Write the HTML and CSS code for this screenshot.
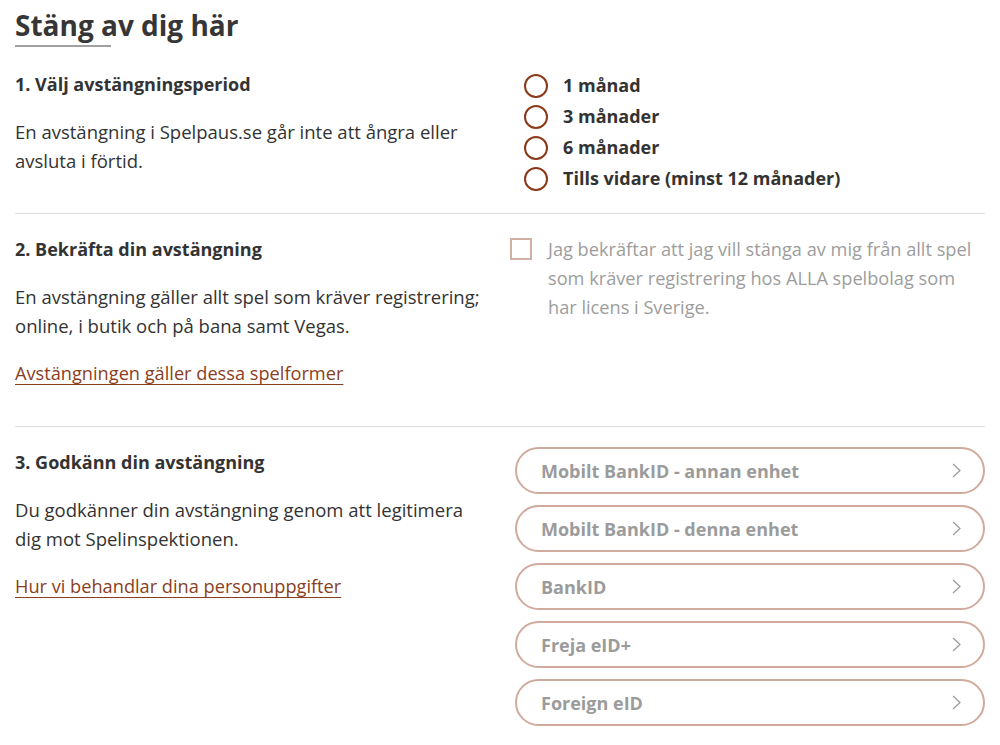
FILE: index.html
```html
<!DOCTYPE html>
<html lang="sv">
<head>
<meta charset="utf-8">
<title>Stäng av dig här</title>
<link rel="stylesheet" href="styles.css">
</head>
<body>
<main class="page">
  <h1 class="title">Stäng av dig här</h1>
  <div class="title-bar"></div>

  <section class="step step-one">
    <div class="left">
      <h2 class="step-head">1. Välj avstängningsperiod</h2>
      <p class="text">En avstängning i Spelpaus.se går inte att ångra eller avsluta i förtid.</p>
    </div>
    <div class="right">
      <ul class="radios">
        <li class="radio"><span class="circle"></span>1 månad</li>
        <li class="radio"><span class="circle"></span>3 månader</li>
        <li class="radio"><span class="circle"></span>6 månader</li>
        <li class="radio"><span class="circle"></span>Tills vidare (minst 12 månader)</li>
      </ul>
    </div>
  </section>

  <section class="step step-two">
    <div class="left">
      <h2 class="step-head">2. Bekräfta din avstängning</h2>
      <p class="text">En avstängning gäller allt spel som kräver registrering; online, i butik och på bana samt Vegas.</p>
      <a class="link" href="#">Avstängningen gäller dessa spelformer</a>
    </div>
    <div class="right">
      <label class="confirm"><span class="box"></span><span class="confirm-text">Jag bekräftar att jag vill stänga av mig från allt spel som kräver registrering hos ALLA spelbolag som har licens i Sverige.</span></label>
    </div>
  </section>

  <section class="step step-three">
    <div class="left">
      <h2 class="step-head">3. Godkänn din avstängning</h2>
      <p class="text">Du godkänner din avstängning genom att legitimera dig mot Spelinspektionen.</p>
      <a class="link" href="#">Hur vi behandlar dina personuppgifter</a>
    </div>
    <div class="right buttons">
      <button class="idbtn">Mobilt BankID - annan enhet<svg class="chev" viewBox="0 0 9 15"><path d="M1 1l7 6.5-7 6.5"/></svg></button>
      <button class="idbtn">Mobilt BankID - denna enhet<svg class="chev" viewBox="0 0 9 15"><path d="M1 1l7 6.5-7 6.5"/></svg></button>
      <button class="idbtn">BankID<svg class="chev" viewBox="0 0 9 15"><path d="M1 1l7 6.5-7 6.5"/></svg></button>
      <button class="idbtn">Freja eID+<svg class="chev" viewBox="0 0 9 15"><path d="M1 1l7 6.5-7 6.5"/></svg></button>
      <button class="idbtn">Foreign eID<svg class="chev" viewBox="0 0 9 15"><path d="M1 1l7 6.5-7 6.5"/></svg></button>
    </div>
  </section>
</main>
</body>
</html>
```

FILE: styles.css
```css
* { box-sizing: border-box; }
html, body { margin: 0; padding: 0; background: #fff; }
body {
  font-family: "Open Sans", "Noto Sans", "Liberation Sans", sans-serif;
  color: #333;
}
.page { padding: 6px 15px 0 15px; }
.title {
  margin: 0;
  font-size: 28px;
  font-weight: 700;
  line-height: 39px;
  color: #363636;
}
.title-bar {
  width: 96px;
  height: 2px;
  background: #a0a0a0;
  margin-bottom: 2px;
}
.step {
  display: flex;
  align-items: flex-start;
  border-bottom: 1px solid #ddd;
  padding-top: 21px;
}
.step-one { padding-bottom: 19px; }
.step-two { padding-bottom: 38px; }
.step-three { border-bottom: none; }
.left { width: 495px; padding-right: 23px; }
.right { flex: 1; }
.step-head {
  margin: 0 0 20px 0;
  font-size: 18px;
  font-weight: 700;
  line-height: 28px;
  color: #333;
}
.text {
  margin: 0;
  font-size: 18.5px;
  line-height: 28.5px;
  color: #333;
}
.text + .link { margin-top: 19px; }
.link {
  display: inline-block;
  color: #8a3e22;
  font-size: 18.2px;
  line-height: 29px;
  text-decoration: underline;
  text-decoration-thickness: 1px;
  text-underline-offset: 4px;
}
.radios { list-style: none; margin: 0; padding: 0 0 0 14px; }
.radio {
  display: flex;
  align-items: center;
  font-size: 18px;
  font-weight: 700;
  line-height: 31px;
  color: #333;
}
.circle {
  width: 24px; height: 24px;
  border: 2px solid #8a3a1a;
  border-radius: 50%;
  margin-right: 15px;
  flex: none;
}
.confirm { display: flex; align-items: flex-start; }
.box {
  width: 22px; height: 22px;
  border: 2px solid #d2b0a4;
  flex: none;
  margin: 3px 16px 0 0;
}
.confirm-text {
  font-size: 18.2px;
  line-height: 29px;
  color: #9d9d9d;
}
.buttons { display: flex; flex-direction: column; gap: 11px; padding-left: 5px; margin-top: -1px; }
.idbtn {
  display: flex;
  align-items: center;
  justify-content: space-between;
  height: 47px;
  width: 100%;
  border: 2px solid #d0ab9d;
  border-radius: 24px;
  background: #fff;
  padding: 0 22px 0 24px;
  font-family: inherit;
  font-size: 18px;
  font-weight: 700;
  color: #9b9b9b;
  text-align: left;
}
.chev { width: 9px; height: 15px; fill: none; stroke: #999; stroke-width: 1.2; }
```
